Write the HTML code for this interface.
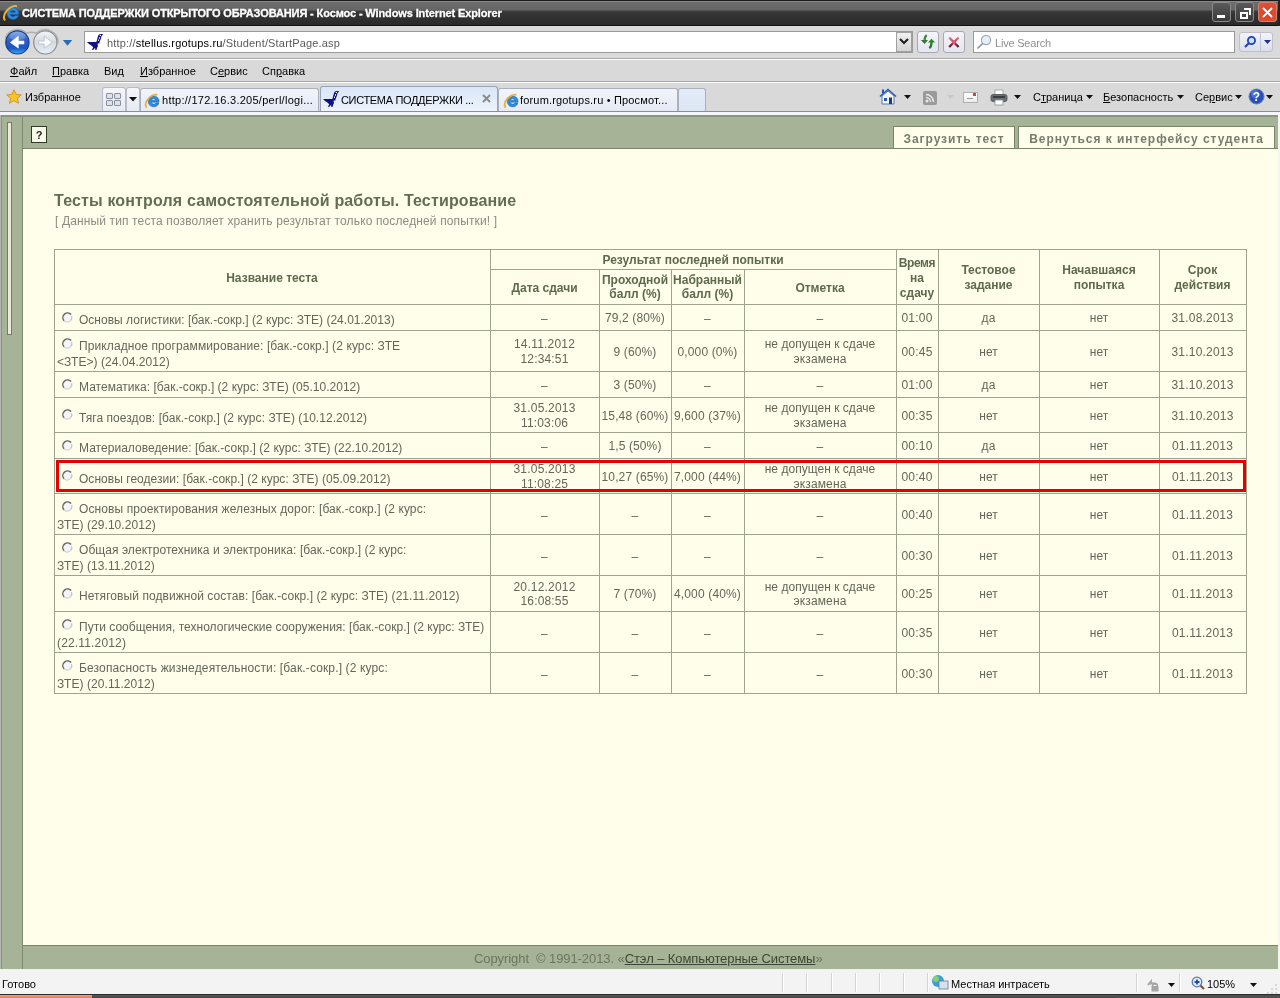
<!DOCTYPE html>
<html><head><meta charset="utf-8"><title>Тесты</title>
<style>
html,body{margin:0;padding:0;}
body{width:1280px;height:998px;position:relative;overflow:hidden;background:#dadada;font-family:"Liberation Sans",sans-serif;}
.r{position:absolute;}
.t{position:absolute;white-space:nowrap;font-family:"Liberation Sans",sans-serif;}
u{text-decoration:underline;}
</style></head><body><div id="w" style="position:absolute;left:0;top:0;width:1280px;height:998px;will-change:transform">
<div class="r" style="left:0px;top:0px;width:1280px;height:26px;background:linear-gradient(#1a1a1a 0,#1a1a1a 1px,#8a8a8a 1px,#8a8a8a 2px,#6c6c6c 2px,#666 10px,#3e3e3e 11px,#353535 13px,#2a2a2a 25px,#101010 25px)"></div>
<svg class="r" style="left:1px;top:2px" width="20" height="20" viewBox="0 0 20 20">
<path d="M11.8 5.5 A6 6 0 1 0 17.6 13.4 L14.3 13.4 A3 3 0 0 1 9 12.4 L17.8 12.4 A6 6 0 0 0 11.8 5.5 Z M9.1 10.2 A3 3 0 0 1 14.6 10.2 Z" fill="#2a8ee0" stroke="#1a5aa8" stroke-width="0.6"/>
<path d="M4 18.5 Q1 14 6 8.5 Q10.5 3.5 16 4.2" stroke="#e8b040" stroke-width="2" fill="none"/>
</svg>
<div class="t ttl" style="left:22px;top:6.00px;font-size:11px;line-height:14px;font-weight:bold;color:#fff;letter-spacing:-0.12px;-webkit-text-stroke:0.3px #fff;">СИСТЕМА ПОДДЕРЖКИ ОТКРЫТОГО ОБРАЗОВАНИЯ - Космос - Windows Internet Explorer</div>
<div class="r" style="left:1212px;top:2px;width:19px;height:20px;border:1px solid #8a8a8a;border-radius:3px;background:linear-gradient(#5a5a5a,#3a3a3a);box-sizing:border-box"></div>
<div class="r" style="left:1235px;top:2px;width:19px;height:20px;border:1px solid #8a8a8a;border-radius:3px;background:linear-gradient(#5a5a5a,#3a3a3a);box-sizing:border-box"></div>
<div class="r" style="left:1217px;top:15px;width:8px;height:3px;background:#fff"></div>
<div class="r" style="left:1240px;top:12px;width:8px;height:7px;border:2px solid #fff;box-sizing:border-box;background:#444"></div>
<div class="r" style="left:1244px;top:8px;width:7px;height:7px;border-top:2px solid #fff;border-right:2px solid #fff;box-sizing:border-box"></div>
<div class="r" style="left:1258px;top:2px;width:19px;height:20px;border:1px solid #d08070;border-radius:3px;background:radial-gradient(circle at 50% 60%,#e8391c,#d85a3a);box-sizing:border-box"></div>
<svg class="r" style="left:1261px;top:6px" width="13" height="13" viewBox="0 0 13 13"><path d="M2 2L11 11M11 2L2 11" stroke="#fff" stroke-width="2"/></svg>
<div class="r" style="left:1278px;top:0px;width:2px;height:26px;background:#222"></div>
<div class="r" style="left:0px;top:26px;width:1280px;height:33px;background:#dadada"></div>
<div class="r" style="left:0px;top:58px;width:1280px;height:1px;background:#a8a8a8"></div>
<div class="r" style="left:0px;top:59px;width:1280px;height:1px;background:#fff"></div>
<svg class="r" style="left:0px;top:26px" width="80" height="32" viewBox="0 0 80 32">
<defs>
<linearGradient id="bk" x1="0" y1="0" x2="0" y2="1"><stop offset="0" stop-color="#6a9ae8"/><stop offset="0.45" stop-color="#2a5cc0"/><stop offset="0.75" stop-color="#1a58c8"/><stop offset="1" stop-color="#3ab0f0"/></linearGradient>
<linearGradient id="fw" x1="0" y1="0" x2="0" y2="1"><stop offset="0" stop-color="#f4f6fa"/><stop offset="0.5" stop-color="#d4dae2"/><stop offset="1" stop-color="#e2f2fa"/></linearGradient>
</defs>
<path d="M5.3 12 A12.9 12.9 0 0 1 26.5 7.3 Q31.35 5.2 36.2 7.3 A12.9 12.9 0 0 1 58.1 17.5" stroke="#b0b0b0" stroke-width="1.5" fill="none"/>
<circle cx="17.4" cy="16.4" r="11.6" fill="#f2f2f2" opacity="0.6"/>
<circle cx="45.3" cy="16.4" r="11.6" fill="url(#fw)" stroke="#8e8e8e" stroke-width="1.2"/>
<circle cx="17.4" cy="16.4" r="11.6" fill="url(#bk)" stroke="#1a3a88" stroke-width="1.2"/>
<ellipse cx="17.4" cy="10" rx="8" ry="4.5" fill="#fff" opacity="0.18"/>
<path d="M10.3 16.4 L18.4 10 L18.4 15 L24 15 L24 18 L18.4 18 L18.4 22.2 Z" fill="#fff" stroke="#e8eef8" stroke-width="0.6" stroke-linejoin="round"/>
<path d="M52.3 16.4 L44.2 10 L44.2 15 L38.6 15 L38.6 18 L44.2 18 L44.2 22.2 Z" fill="#f8fafc" stroke="#b8bcc4" stroke-width="0.8" stroke-linejoin="round"/>
<path d="M62.8 14 L72.2 14 L67.5 19.7 Z" fill="#2a6cb0"/>
</svg>
<div class="r" style="left:84px;top:31px;width:829px;height:22px;background:#fff;border:1px solid #9a9a9a;box-sizing:border-box"></div>
<svg class="r" style="left:84px;top:31px" width="22" height="22" viewBox="0 0 22 22">
<path d="M3 11 L15.5 11 L15.5 12.5 L13.5 12.5 L14 15 L13 17 L12.8 18.8 L11 18.8 L11.3 17.3 L10.2 17.5 L9.6 18.8 L7.8 18.8 L9.3 16.2 L7 14.2 L5 13 Z" fill="#10108a"/>
<path d="M12.4 11 L13.5 7 L14.3 4.2 L16 3 L19 3 L18.5 4 L17.5 5.2 L16.8 8 L15.6 11 Z" fill="#10108a"/>
<circle cx="16.4" cy="4.5" r="0.7" fill="#fff"/><ellipse cx="15.5" cy="7" rx="0.5" ry="0.9" fill="#fff"/><ellipse cx="14.5" cy="9.2" rx="0.5" ry="0.9" fill="#fff"/>
</svg>
<div class="t" style="left:107px;top:36.0px;font-size:11px;line-height:14px;color:#5a5a5a;letter-spacing:0.17px">http://<span style="color:#000">stellus.rgotups.ru</span>/Student/StartPage.asp</div>
<span class="t" style="display:none"></span>
<div class="r" style="left:896px;top:32px;width:16px;height:20px;background:linear-gradient(#f0f0f0,#d4d4d4);border:1px solid #a0a0a0;box-sizing:border-box"></div>
<svg class="r" style="left:899px;top:38px" width="10" height="8" viewBox="0 0 10 8"><path d="M1 1L5 5L9 1" stroke="#222" stroke-width="2.2" fill="none"/></svg>
<div class="r" style="left:917px;top:31px;width:22px;height:22px;border:1px solid #a8a8b4;border-radius:3px;background:linear-gradient(#f4f4fa,#e4e6f0);box-sizing:border-box"></div>
<svg class="r" style="left:917px;top:31px" width="22" height="22" viewBox="0 0 22 22">
<path d="M7.6 9.5 Q7.4 5.5 9.8 4.2" stroke="#3a8a3a" stroke-width="2.2" fill="none"/><path d="M3.9 9 L11 9 L7.6 12.9 Z" fill="#2f7a2f"/>
<path d="M14.5 11 Q14.7 15.5 12.3 17.2" stroke="#2a7a2a" stroke-width="2.2" fill="none"/><path d="M11 11.5 L18.2 11.5 L14.5 7.7 Z" fill="#2a8a2a"/>
</svg>
<div class="r" style="left:943px;top:31px;width:22px;height:22px;border:1px solid #a8a8b4;border-radius:3px;background:linear-gradient(#f4f4fa,#e4e6f0);box-sizing:border-box"></div>
<svg class="r" style="left:943px;top:31px" width="22" height="22" viewBox="0 0 22 22">
<defs><linearGradient id="sx" x1="0" y1="0" x2="0" y2="1"><stop offset="0" stop-color="#e07888"/><stop offset="1" stop-color="#6a0a1a"/></linearGradient></defs>
<path d="M6.2 6.5 L15.6 16 M15.6 6.5 L6.2 16" stroke="url(#sx)" stroke-width="2.3"/><circle cx="10.9" cy="11.2" r="1.8" fill="#f05070"/>
</svg>
<div class="r" style="left:973px;top:31px;width:262px;height:22px;background:#fff;border:1px solid #9a9a9a;box-sizing:border-box"></div>
<svg class="r" style="left:976px;top:34px" width="16" height="16" viewBox="0 0 16 16"><circle cx="10" cy="6" r="4.6" fill="#e6eef8" stroke="#a0aab4" stroke-width="1.2"/><path d="M6.8 9.2L1.5 14.5" stroke="#8a9098" stroke-width="1.6"/></svg>
<div class="t " style="left:995px;top:36.00px;font-size:11px;line-height:14px;font-weight:normal;color:#8f8f8f;letter-spacing:-0.2px">Live Search</div>
<div class="r" style="left:1239px;top:32px;width:34px;height:20px;border:1px solid #c0c0cc;border-radius:3px;background:linear-gradient(#f2f4fa,#dadeea);box-sizing:border-box"></div>
<div class="r" style="left:1260px;top:33px;width:1px;height:18px;background:#c0c4d0"></div>
<svg class="r" style="left:1243px;top:35px" width="14" height="14" viewBox="0 0 14 14"><circle cx="8.5" cy="5.5" r="3.6" fill="#c8e0ff" stroke="#2040c0" stroke-width="1.8"/><path d="M6 8L2 12" stroke="#2040c0" stroke-width="2.2"/></svg>
<svg class="r" style="left:1264px;top:40px" width="7" height="5" viewBox="0 0 7 5"><path d="M0 0H7L3.5 4Z" fill="#20308a"/></svg>
<div class="r" style="left:0px;top:60px;width:1280px;height:21px;background:#d9d9d9"></div>
<div class="r" style="left:0px;top:81px;width:1280px;height:1px;background:#a8a8a8"></div>
<div class="r" style="left:0px;top:82px;width:1280px;height:1px;background:#fff"></div>
<div class="t" style="left:10px;top:64.0px;font-size:11px;line-height:14px;color:#000"><u>Ф</u>айл</div>
<div class="t" style="left:52px;top:64.0px;font-size:11px;line-height:14px;color:#000"><u>П</u>равка</div>
<div class="t" style="left:104px;top:64.0px;font-size:11px;line-height:14px;color:#000">Ви<u>д</u></div>
<div class="t" style="left:140px;top:64.0px;font-size:11px;line-height:14px;color:#000"><u>И</u>збранное</div>
<div class="t" style="left:210px;top:64.0px;font-size:11px;line-height:14px;color:#000">С<u>е</u>рвис</div>
<div class="t" style="left:262px;top:64.0px;font-size:11px;line-height:14px;color:#000">Сп<u>р</u>авка</div>
<div class="r" style="left:0px;top:83px;width:1280px;height:28px;background:#d9d9d9"></div>
<div class="r" style="left:0px;top:111px;width:1280px;height:1px;background:#8c8c96"></div>
<div class="r" style="left:0px;top:112px;width:1280px;height:3px;background:#f3f5fa"></div>
<svg class="r" style="left:6px;top:89px" width="16" height="16" viewBox="0 0 16 16"><path d="M8 0.8L10.2 5.4L15.2 5.9L11.4 9.3L12.5 14.3L8 11.7L3.5 14.3L4.6 9.3L0.8 5.9L5.8 5.4Z" fill="#f7c52a" stroke="#c88a10" stroke-width="0.8"/></svg>
<div class="t " style="left:25px;top:90.00px;font-size:11px;line-height:14px;font-weight:normal;color:#000;">Избранное</div>
<div class="r" style="left:102px;top:87px;width:24px;height:24px;border:1px solid #b8bcc8;border-bottom:none;border-radius:3px 3px 0 0;background:linear-gradient(#f4f6fa,#e6eaf2);box-sizing:border-box"></div>
<div class="r" style="left:106px;top:93px;width:7px;height:6px;border:1px solid #8890a0;border-radius:1px;background:#dde2ea;box-sizing:border-box"></div>
<div class="r" style="left:114px;top:93px;width:7px;height:6px;border:1px solid #8890a0;border-radius:1px;background:#dde2ea;box-sizing:border-box"></div>
<div class="r" style="left:106px;top:100px;width:7px;height:6px;border:1px solid #8890a0;border-radius:1px;background:#dde2ea;box-sizing:border-box"></div>
<div class="r" style="left:114px;top:100px;width:7px;height:6px;border:1px solid #8890a0;border-radius:1px;background:#dde2ea;box-sizing:border-box"></div>
<div class="r" style="left:126px;top:87px;width:14px;height:24px;border:1px solid #b8bcc8;border-bottom:none;border-radius:3px 3px 0 0;background:linear-gradient(#f4f6fa,#e6eaf2);box-sizing:border-box"></div>
<svg class="r" style="left:129px;top:97px" width="8" height="5" viewBox="0 0 8 5"><path d="M0 0H8L4 4.5Z" fill="#111"/></svg>
<div class="r" style="left:140px;top:88px;width:179px;height:23px;border:1px solid #aab0bc;border-bottom:none;border-radius:3px 3px 0 0;background:linear-gradient(#f2f5fb,#e4e9f3);box-sizing:border-box"></div>
<svg class="r" style="left:143px;top:91px" width="18" height="18" viewBox="0 0 20 20">
<path d="M11.8 5.5 A6 6 0 1 0 17.6 13.4 L14.3 13.4 A3 3 0 0 1 9 12.4 L17.8 12.4 A6 6 0 0 0 11.8 5.5 Z M9.1 10.2 A3 3 0 0 1 14.6 10.2 Z" fill="#2a8ee0" stroke="#1a5aa8" stroke-width="0.6"/>
<path d="M4 18.5 Q1 14 6 8.5 Q10.5 3.5 16 4.2" stroke="#e8b040" stroke-width="2" fill="none"/>
</svg>
<div class="t " style="left:162px;top:92.50px;font-size:11px;line-height:14px;font-weight:normal;color:#000;letter-spacing:0.27px">http://172.16.3.205/perl/logi...</div>
<div class="r" style="left:320px;top:86px;width:178px;height:25px;border:1px solid #9aa4b4;border-bottom:none;border-radius:3px 3px 0 0;background:linear-gradient(#d8e6f8,#eef3fb);box-sizing:border-box"></div>
<svg class="r" style="left:320px;top:88px" width="22" height="22" viewBox="0 0 22 22">
<path d="M3 11 L15.5 11 L15.5 12.5 L13.5 12.5 L14 15 L13 17 L12.8 18.8 L11 18.8 L11.3 17.3 L10.2 17.5 L9.6 18.8 L7.8 18.8 L9.3 16.2 L7 14.2 L5 13 Z" fill="#10108a"/>
<path d="M12.4 11 L13.5 7 L14.3 4.2 L16 3 L19 3 L18.5 4 L17.5 5.2 L16.8 8 L15.6 11 Z" fill="#10108a"/>
<circle cx="16.4" cy="4.5" r="0.7" fill="#fff"/><ellipse cx="15.5" cy="7" rx="0.5" ry="0.9" fill="#fff"/><ellipse cx="14.5" cy="9.2" rx="0.5" ry="0.9" fill="#fff"/>
</svg>
<div class="t " style="left:341px;top:92.50px;font-size:11px;line-height:14px;font-weight:normal;color:#000;letter-spacing:-0.33px">СИСТЕМА ПОДДЕРЖКИ ...</div>
<svg class="r" style="left:482px;top:94px" width="9" height="9" viewBox="0 0 9 9"><path d="M1 1L8 8M8 1L1 8" stroke="#8a8a8a" stroke-width="2"/></svg>
<div class="r" style="left:498px;top:88px;width:180px;height:23px;border:1px solid #aab0bc;border-bottom:none;border-radius:3px 3px 0 0;background:linear-gradient(#f2f5fb,#e4e9f3);box-sizing:border-box"></div>
<svg class="r" style="left:502px;top:91px" width="18" height="18" viewBox="0 0 20 20">
<path d="M11.8 5.5 A6 6 0 1 0 17.6 13.4 L14.3 13.4 A3 3 0 0 1 9 12.4 L17.8 12.4 A6 6 0 0 0 11.8 5.5 Z M9.1 10.2 A3 3 0 0 1 14.6 10.2 Z" fill="#2a8ee0" stroke="#1a5aa8" stroke-width="0.6"/>
<path d="M4 18.5 Q1 14 6 8.5 Q10.5 3.5 16 4.2" stroke="#e8b040" stroke-width="2" fill="none"/>
</svg>
<div class="t " style="left:520px;top:92.50px;font-size:11px;line-height:14px;font-weight:normal;color:#000;letter-spacing:0.17px">forum.rgotups.ru • Просмот...</div>
<div class="r" style="left:678px;top:88px;width:28px;height:23px;border:1px solid #aab0bc;border-bottom:none;border-radius:3px 3px 0 0;background:linear-gradient(#e4ecf8,#dce6f4);box-sizing:border-box"></div>
<svg class="r" style="left:879px;top:88px" width="18" height="17" viewBox="0 0 18 17">
<path d="M1 8.5L9 1.5L17 8.5" stroke="#2a5ab0" stroke-width="1.6" fill="none"/>
<path d="M3 8V16H15V8L9 3Z" fill="#f4f4f4" stroke="#5a7ab0" stroke-width="1"/>
<rect x="5" y="10" width="3" height="3" fill="#2a5ab0"/><rect x="10" y="9.5" width="3" height="6.5" fill="#1a3a8a"/>
<rect x="3" y="1.5" width="2" height="4" fill="#2a5ab0"/></svg>
<svg class="r" style="left:904px;top:95px" width="7" height="4" viewBox="0 0 7 4"><path d="M0 0H7L3.5 4Z" fill="#111"/></svg>
<div class="r" style="left:923px;top:91px;width:14px;height:14px;border-radius:2px;background:#9a9a9a"></div>
<svg class="r" style="left:923px;top:91px" width="14" height="14" viewBox="0 0 14 14"><circle cx="4" cy="10" r="1.5" fill="#e8e8e8"/><path d="M3 6.5A4.5 4.5 0 0 1 7.5 11M3 3.5A7.5 7.5 0 0 1 10.5 11" stroke="#e8e8e8" stroke-width="1.5" fill="none"/></svg>
<svg class="r" style="left:947px;top:95px" width="7" height="4" viewBox="0 0 7 4"><path d="M0 0H7L3.5 4Z" fill="#c8c8c8"/></svg>
<div class="r" style="left:963px;top:92px;width:15px;height:11px;border:1px solid #b0b0b0;background:linear-gradient(#fff,#ececec);box-sizing:border-box"></div>
<div class="r" style="left:973px;top:93px;width:3px;height:3px;background:#d84040"></div>
<div class="r" style="left:967px;top:98px;width:6px;height:1px;background:#999"></div>
<svg class="r" style="left:990px;top:89px" width="18" height="17" viewBox="0 0 18 17">
<rect x="5" y="1" width="8" height="5" fill="#fff" stroke="#999" stroke-width="0.8"/>
<rect x="1" y="5.5" width="16" height="7" rx="2" fill="#6a7070" stroke="#4a5050" stroke-width="0.8"/>
<rect x="3" y="7" width="12" height="2" fill="#3a4040"/>
<rect x="5" y="11" width="8" height="5" fill="#fff" stroke="#8a9090" stroke-width="0.8"/></svg>
<svg class="r" style="left:1014px;top:95px" width="7" height="4" viewBox="0 0 7 4"><path d="M0 0H7L3.5 4Z" fill="#111"/></svg>
<div class="t" style="left:1033px;top:90.0px;font-size:11px;line-height:14px;color:#000">С<u>т</u>раница</div>
<svg class="r" style="left:1086px;top:95px" width="7" height="4" viewBox="0 0 7 4"><path d="M0 0H7L3.5 4Z" fill="#111"/></svg>
<div class="t" style="left:1103px;top:90.0px;font-size:11px;line-height:14px;color:#000"><u>Б</u>езопасность</div>
<svg class="r" style="left:1177px;top:95px" width="7" height="4" viewBox="0 0 7 4"><path d="M0 0H7L3.5 4Z" fill="#111"/></svg>
<div class="t" style="left:1195px;top:90.0px;font-size:11px;line-height:14px;color:#000">Се<u>р</u>вис</div>
<svg class="r" style="left:1235px;top:95px" width="7" height="4" viewBox="0 0 7 4"><path d="M0 0H7L3.5 4Z" fill="#111"/></svg>
<svg class="r" style="left:1248px;top:88px" width="17" height="17" viewBox="0 0 17 17"><circle cx="8.5" cy="8.5" r="7.5" fill="#2a50c0" stroke="#6a80b0" stroke-width="1"/><circle cx="7" cy="6" r="4" fill="#5a88e8" opacity="0.6"/><text x="8.5" y="13" font-family="Liberation Sans" font-weight="bold" font-size="12" fill="#fff" text-anchor="middle">?</text></svg>
<svg class="r" style="left:1266px;top:95px" width="7" height="4" viewBox="0 0 7 4"><path d="M0 0H7L3.5 4Z" fill="#111"/></svg>
<div class="r" style="left:0px;top:115px;width:1280px;height:854px;background:#a6b397"></div>
<div class="r" style="left:0px;top:115px;width:1280px;height:2px;background:#8a9580"></div>
<div class="r" style="left:0px;top:115px;width:1px;height:854px;background:#b4b8b0"></div>
<div class="r" style="left:1px;top:115px;width:1px;height:854px;background:#8a9085"></div>
<div class="r" style="left:22px;top:117px;width:1px;height:852px;background:#7f8a72"></div>
<div class="r" style="left:7px;top:122px;width:5px;height:213px;background:#ece9d6;border:1px solid #78786a;box-sizing:border-box"></div>
<div class="r" style="left:1278px;top:115px;width:2px;height:854px;background:#f4f6f0"></div>
<div class="r" style="left:31px;top:126px;width:16px;height:17px;background:#fafaea;border:1px solid #2e3a26;box-sizing:border-box"></div>
<div class="t" style="left:31px;width:16px;text-align:center;top:128.00px;font-size:11px;line-height:14px;font-weight:bold;color:#222;">?</div>
<div class="r" style="left:23px;top:148px;width:1255px;height:1px;background:#7a866c"></div>
<div class="r" style="left:23px;top:149px;width:1255px;height:796px;background:#fefeea"></div>
<div class="r" style="left:23px;top:945px;width:1255px;height:1px;background:#7a866c"></div>
<div class="r" style="left:893px;top:126px;width:122px;height:22px;background:#fefeea;border:1px solid #7a866c;border-bottom:none;box-sizing:border-box"></div>
<div class="t" style="left:893px;width:122px;text-align:center;top:131.00px;font-size:12px;line-height:16px;font-weight:bold;color:#787d6c;letter-spacing:0.95px">Загрузить тест</div>
<div class="r" style="left:1018px;top:126px;width:257px;height:22px;background:#fefeea;border:1px solid #7a866c;border-bottom:none;box-sizing:border-box"></div>
<div class="t" style="left:1018px;width:257px;text-align:center;top:131.00px;font-size:12px;line-height:16px;font-weight:bold;color:#787d6c;letter-spacing:0.95px">Вернуться к интерфейсу студента</div>
<div class="r" style="left:1275px;top:126px;width:3px;height:22px;background:#a6b397"></div>
<div class="t " style="left:54px;top:189.50px;font-size:16px;line-height:21px;font-weight:bold;color:#636d55;letter-spacing:0.15px">Тесты контроля самостоятельной работы. Тестирование</div>
<div class="t " style="left:55px;top:213.00px;font-size:12px;line-height:16px;font-weight:normal;color:#8c8c84;letter-spacing:0.13px">[ Данный тип теста позволяет хранить результат только последней попытки! ]</div>
<div class="r" style="left:54px;top:249px;width:1193px;height:1px;background:#a0a48e"></div>
<div class="r" style="left:54px;top:304px;width:1193px;height:1px;background:#a0a48e"></div>
<div class="r" style="left:54px;top:330px;width:1193px;height:1px;background:#a0a48e"></div>
<div class="r" style="left:54px;top:371px;width:1193px;height:1px;background:#a0a48e"></div>
<div class="r" style="left:54px;top:397px;width:1193px;height:1px;background:#a0a48e"></div>
<div class="r" style="left:54px;top:432px;width:1193px;height:1px;background:#a0a48e"></div>
<div class="r" style="left:54px;top:458px;width:1193px;height:1px;background:#a0a48e"></div>
<div class="r" style="left:54px;top:493px;width:1193px;height:1px;background:#a0a48e"></div>
<div class="r" style="left:54px;top:534px;width:1193px;height:1px;background:#a0a48e"></div>
<div class="r" style="left:54px;top:575px;width:1193px;height:1px;background:#a0a48e"></div>
<div class="r" style="left:54px;top:611px;width:1193px;height:1px;background:#a0a48e"></div>
<div class="r" style="left:54px;top:652px;width:1193px;height:1px;background:#a0a48e"></div>
<div class="r" style="left:54px;top:693px;width:1193px;height:1px;background:#a0a48e"></div>
<div class="r" style="left:490px;top:269px;width:406px;height:1px;background:#a0a48e"></div>
<div class="r" style="left:54px;top:249px;width:1px;height:445px;background:#a0a48e"></div>
<div class="r" style="left:490px;top:249px;width:1px;height:445px;background:#a0a48e"></div>
<div class="r" style="left:599px;top:269px;width:1px;height:425px;background:#a0a48e"></div>
<div class="r" style="left:671px;top:269px;width:1px;height:425px;background:#a0a48e"></div>
<div class="r" style="left:744px;top:269px;width:1px;height:425px;background:#a0a48e"></div>
<div class="r" style="left:896px;top:249px;width:1px;height:445px;background:#a0a48e"></div>
<div class="r" style="left:938px;top:249px;width:1px;height:445px;background:#a0a48e"></div>
<div class="r" style="left:1039px;top:249px;width:1px;height:445px;background:#a0a48e"></div>
<div class="r" style="left:1159px;top:249px;width:1px;height:445px;background:#a0a48e"></div>
<div class="r" style="left:1246px;top:249px;width:1px;height:445px;background:#a0a48e"></div>
<div class="t" style="left:54px;width:436px;text-align:center;top:269.50px;font-size:12px;line-height:16px;font-weight:bold;color:#5e6a4c;">Название теста</div>
<div class="t" style="left:490px;width:406px;text-align:center;top:252.00px;font-size:12px;line-height:16px;font-weight:bold;color:#5e6a4c;">Результат последней попытки</div>
<div class="t" style="left:490px;width:109px;text-align:center;top:279.50px;font-size:12px;line-height:16px;font-weight:bold;color:#5e6a4c;">Дата сдачи</div>
<div class="t" style="left:599px;width:72px;text-align:center;top:271.50px;font-size:12px;line-height:16px;font-weight:bold;color:#5e6a4c;">Проходной</div>
<div class="t" style="left:599px;width:72px;text-align:center;top:286.00px;font-size:12px;line-height:16px;font-weight:bold;color:#5e6a4c;">балл (%)</div>
<div class="t" style="left:671px;width:73px;text-align:center;top:271.50px;font-size:12px;line-height:16px;font-weight:bold;color:#5e6a4c;">Набранный</div>
<div class="t" style="left:671px;width:73px;text-align:center;top:286.00px;font-size:12px;line-height:16px;font-weight:bold;color:#5e6a4c;">балл (%)</div>
<div class="t" style="left:744px;width:152px;text-align:center;top:279.50px;font-size:12px;line-height:16px;font-weight:bold;color:#5e6a4c;">Отметка</div>
<div class="t" style="left:896px;width:42px;text-align:center;top:255.00px;font-size:12px;line-height:16px;font-weight:bold;color:#5e6a4c;letter-spacing:-0.4px">Время</div>
<div class="t" style="left:896px;width:42px;text-align:center;top:270.00px;font-size:12px;line-height:16px;font-weight:bold;color:#5e6a4c;">на</div>
<div class="t" style="left:896px;width:42px;text-align:center;top:284.75px;font-size:12px;line-height:16px;font-weight:bold;color:#5e6a4c;">сдачу</div>
<div class="t" style="left:938px;width:101px;text-align:center;top:261.50px;font-size:12px;line-height:16px;font-weight:bold;color:#5e6a4c;">Тестовое</div>
<div class="t" style="left:938px;width:101px;text-align:center;top:276.50px;font-size:12px;line-height:16px;font-weight:bold;color:#5e6a4c;">задание</div>
<div class="t" style="left:1039px;width:120px;text-align:center;top:261.50px;font-size:12px;line-height:16px;font-weight:bold;color:#5e6a4c;">Начавшаяся</div>
<div class="t" style="left:1039px;width:120px;text-align:center;top:276.50px;font-size:12px;line-height:16px;font-weight:bold;color:#5e6a4c;">попытка</div>
<div class="t" style="left:1159px;width:87px;text-align:center;top:261.50px;font-size:12px;line-height:16px;font-weight:bold;color:#5e6a4c;">Срок</div>
<div class="t" style="left:1159px;width:87px;text-align:center;top:276.50px;font-size:12px;line-height:16px;font-weight:bold;color:#5e6a4c;">действия</div>
<svg class="r" style="left:61px;top:310.8px" width="13" height="13" viewBox="0 0 13 13"><circle cx="6.25" cy="6.4" r="4.8" fill="#f6f6fa"/><path d="M9.55 9.7 A4.65 4.65 0 0 1 2.95 9.7" stroke="#d0d0cc" stroke-width="1.2" fill="none"/><path d="M9.55 9.7 A4.65 4.65 0 0 0 10.6 5" stroke="#c4c4c0" stroke-width="1.2" fill="none"/><path d="M2.95 9.7 A4.65 4.65 0 0 1 10.1 3.6" stroke="#6a6a66" stroke-width="1.5" fill="none"/></svg>
<div class="t " style="left:79px;top:312.00px;font-size:12px;line-height:16px;font-weight:normal;color:#646658;letter-spacing:0.013px">Основы логистики: [бак.-сокр.] (2 курс: ЗТЕ) (24.01.2013)</div>
<div class="t" style="left:490px;width:109px;text-align:center;top:311.00px;font-size:12px;line-height:16px;font-weight:normal;color:#646658;letter-spacing:0.326px;">–</div>
<div class="t" style="left:599px;width:72px;text-align:center;top:310.00px;font-size:12px;line-height:16px;font-weight:normal;color:#646658;letter-spacing:0.130px;">79,2 (80%)</div>
<div class="t" style="left:671px;width:73px;text-align:center;top:311.00px;font-size:12px;line-height:16px;font-weight:normal;color:#646658;letter-spacing:0.326px;">–</div>
<div class="t" style="left:744px;width:152px;text-align:center;top:311.00px;font-size:12px;line-height:16px;font-weight:normal;color:#646658;letter-spacing:0.326px;">–</div>
<div class="t" style="left:896px;width:42px;text-align:center;top:310.00px;font-size:12px;line-height:16px;font-weight:normal;color:#646658;letter-spacing:0.194px;">01:00</div>
<div class="t" style="left:938px;width:101px;text-align:center;top:310.00px;font-size:12px;line-height:16px;font-weight:normal;color:#646658;letter-spacing:0.162px;">да</div>
<div class="t" style="left:1039px;width:120px;text-align:center;top:310.00px;font-size:12px;line-height:16px;font-weight:normal;color:#646658;letter-spacing:0.068px;">нет</div>
<div class="t" style="left:1159px;width:87px;text-align:center;top:310.00px;font-size:12px;line-height:16px;font-weight:normal;color:#646658;letter-spacing:0.194px;">31.08.2013</div>
<svg class="r" style="left:61px;top:336.8px" width="13" height="13" viewBox="0 0 13 13"><circle cx="6.25" cy="6.4" r="4.8" fill="#f6f6fa"/><path d="M9.55 9.7 A4.65 4.65 0 0 1 2.95 9.7" stroke="#d0d0cc" stroke-width="1.2" fill="none"/><path d="M9.55 9.7 A4.65 4.65 0 0 0 10.6 5" stroke="#c4c4c0" stroke-width="1.2" fill="none"/><path d="M2.95 9.7 A4.65 4.65 0 0 1 10.1 3.6" stroke="#6a6a66" stroke-width="1.5" fill="none"/></svg>
<div class="t " style="left:79px;top:338.00px;font-size:12px;line-height:16px;font-weight:normal;color:#646658;letter-spacing:0.098px">Прикладное программирование: [бак.-сокр.] (2 курс: ЗТЕ</div>
<div class="t " style="left:57px;top:354.00px;font-size:12px;line-height:16px;font-weight:normal;color:#646658;letter-spacing:0.054px;">&lt;ЗТЕ&gt;) (24.04.2012)</div>
<div class="t" style="left:490px;width:109px;text-align:center;top:336.00px;font-size:12px;line-height:16px;font-weight:normal;color:#646658;letter-spacing:0.194px;">14.11.2012</div>
<div class="t" style="left:490px;width:109px;text-align:center;top:350.50px;font-size:12px;line-height:16px;font-weight:normal;color:#646658;letter-spacing:0.161px;">12:34:51</div>
<div class="t" style="left:599px;width:72px;text-align:center;top:343.50px;font-size:12px;line-height:16px;font-weight:normal;color:#646658;letter-spacing:0.140px;">9 (60%)</div>
<div class="t" style="left:671px;width:73px;text-align:center;top:343.50px;font-size:12px;line-height:16px;font-weight:normal;color:#646658;letter-spacing:0.130px;">0,000 (0%)</div>
<div class="t" style="left:744px;width:152px;text-align:center;top:336.00px;font-size:12px;line-height:16px;font-weight:normal;color:#646658;letter-spacing:0.028px;">не допущен к сдаче</div>
<div class="t" style="left:744px;width:152px;text-align:center;top:350.50px;font-size:12px;line-height:16px;font-weight:normal;color:#646658;letter-spacing:0.153px;">экзамена</div>
<div class="t" style="left:896px;width:42px;text-align:center;top:343.50px;font-size:12px;line-height:16px;font-weight:normal;color:#646658;letter-spacing:0.194px;">00:45</div>
<div class="t" style="left:938px;width:101px;text-align:center;top:343.50px;font-size:12px;line-height:16px;font-weight:normal;color:#646658;letter-spacing:0.068px;">нет</div>
<div class="t" style="left:1039px;width:120px;text-align:center;top:343.50px;font-size:12px;line-height:16px;font-weight:normal;color:#646658;letter-spacing:0.068px;">нет</div>
<div class="t" style="left:1159px;width:87px;text-align:center;top:343.50px;font-size:12px;line-height:16px;font-weight:normal;color:#646658;letter-spacing:0.194px;">31.10.2013</div>
<svg class="r" style="left:61px;top:377.8px" width="13" height="13" viewBox="0 0 13 13"><circle cx="6.25" cy="6.4" r="4.8" fill="#f6f6fa"/><path d="M9.55 9.7 A4.65 4.65 0 0 1 2.95 9.7" stroke="#d0d0cc" stroke-width="1.2" fill="none"/><path d="M9.55 9.7 A4.65 4.65 0 0 0 10.6 5" stroke="#c4c4c0" stroke-width="1.2" fill="none"/><path d="M2.95 9.7 A4.65 4.65 0 0 1 10.1 3.6" stroke="#6a6a66" stroke-width="1.5" fill="none"/></svg>
<div class="t " style="left:79px;top:379.00px;font-size:12px;line-height:16px;font-weight:normal;color:#646658;letter-spacing:0.016px">Математика: [бак.-сокр.] (2 курс: ЗТЕ) (05.10.2012)</div>
<div class="t" style="left:490px;width:109px;text-align:center;top:378.00px;font-size:12px;line-height:16px;font-weight:normal;color:#646658;letter-spacing:0.326px;">–</div>
<div class="t" style="left:599px;width:72px;text-align:center;top:377.00px;font-size:12px;line-height:16px;font-weight:normal;color:#646658;letter-spacing:0.140px;">3 (50%)</div>
<div class="t" style="left:671px;width:73px;text-align:center;top:378.00px;font-size:12px;line-height:16px;font-weight:normal;color:#646658;letter-spacing:0.326px;">–</div>
<div class="t" style="left:744px;width:152px;text-align:center;top:378.00px;font-size:12px;line-height:16px;font-weight:normal;color:#646658;letter-spacing:0.326px;">–</div>
<div class="t" style="left:896px;width:42px;text-align:center;top:377.00px;font-size:12px;line-height:16px;font-weight:normal;color:#646658;letter-spacing:0.194px;">01:00</div>
<div class="t" style="left:938px;width:101px;text-align:center;top:377.00px;font-size:12px;line-height:16px;font-weight:normal;color:#646658;letter-spacing:0.162px;">да</div>
<div class="t" style="left:1039px;width:120px;text-align:center;top:377.00px;font-size:12px;line-height:16px;font-weight:normal;color:#646658;letter-spacing:0.068px;">нет</div>
<div class="t" style="left:1159px;width:87px;text-align:center;top:377.00px;font-size:12px;line-height:16px;font-weight:normal;color:#646658;letter-spacing:0.194px;">31.10.2013</div>
<svg class="r" style="left:61px;top:408.3px" width="13" height="13" viewBox="0 0 13 13"><circle cx="6.25" cy="6.4" r="4.8" fill="#f6f6fa"/><path d="M9.55 9.7 A4.65 4.65 0 0 1 2.95 9.7" stroke="#d0d0cc" stroke-width="1.2" fill="none"/><path d="M9.55 9.7 A4.65 4.65 0 0 0 10.6 5" stroke="#c4c4c0" stroke-width="1.2" fill="none"/><path d="M2.95 9.7 A4.65 4.65 0 0 1 10.1 3.6" stroke="#6a6a66" stroke-width="1.5" fill="none"/></svg>
<div class="t " style="left:79px;top:409.50px;font-size:12px;line-height:16px;font-weight:normal;color:#646658;letter-spacing:0.058px">Тяга поездов: [бак.-сокр.] (2 курс: ЗТЕ) (10.12.2012)</div>
<div class="t" style="left:490px;width:109px;text-align:center;top:400.00px;font-size:12px;line-height:16px;font-weight:normal;color:#646658;letter-spacing:0.194px;">31.05.2013</div>
<div class="t" style="left:490px;width:109px;text-align:center;top:414.50px;font-size:12px;line-height:16px;font-weight:normal;color:#646658;letter-spacing:0.161px;">11:03:06</div>
<div class="t" style="left:599px;width:72px;text-align:center;top:407.50px;font-size:12px;line-height:16px;font-weight:normal;color:#646658;letter-spacing:0.148px;">15,48 (60%)</div>
<div class="t" style="left:671px;width:73px;text-align:center;top:407.50px;font-size:12px;line-height:16px;font-weight:normal;color:#646658;letter-spacing:0.148px;">9,600 (37%)</div>
<div class="t" style="left:744px;width:152px;text-align:center;top:400.00px;font-size:12px;line-height:16px;font-weight:normal;color:#646658;letter-spacing:0.028px;">не допущен к сдаче</div>
<div class="t" style="left:744px;width:152px;text-align:center;top:414.50px;font-size:12px;line-height:16px;font-weight:normal;color:#646658;letter-spacing:0.153px;">экзамена</div>
<div class="t" style="left:896px;width:42px;text-align:center;top:407.50px;font-size:12px;line-height:16px;font-weight:normal;color:#646658;letter-spacing:0.194px;">00:35</div>
<div class="t" style="left:938px;width:101px;text-align:center;top:407.50px;font-size:12px;line-height:16px;font-weight:normal;color:#646658;letter-spacing:0.068px;">нет</div>
<div class="t" style="left:1039px;width:120px;text-align:center;top:407.50px;font-size:12px;line-height:16px;font-weight:normal;color:#646658;letter-spacing:0.068px;">нет</div>
<div class="t" style="left:1159px;width:87px;text-align:center;top:407.50px;font-size:12px;line-height:16px;font-weight:normal;color:#646658;letter-spacing:0.194px;">31.10.2013</div>
<svg class="r" style="left:61px;top:438.8px" width="13" height="13" viewBox="0 0 13 13"><circle cx="6.25" cy="6.4" r="4.8" fill="#f6f6fa"/><path d="M9.55 9.7 A4.65 4.65 0 0 1 2.95 9.7" stroke="#d0d0cc" stroke-width="1.2" fill="none"/><path d="M9.55 9.7 A4.65 4.65 0 0 0 10.6 5" stroke="#c4c4c0" stroke-width="1.2" fill="none"/><path d="M2.95 9.7 A4.65 4.65 0 0 1 10.1 3.6" stroke="#6a6a66" stroke-width="1.5" fill="none"/></svg>
<div class="t " style="left:79px;top:440.00px;font-size:12px;line-height:16px;font-weight:normal;color:#646658;letter-spacing:0.030px">Материаловедение: [бак.-сокр.] (2 курс: ЗТЕ) (22.10.2012)</div>
<div class="t" style="left:490px;width:109px;text-align:center;top:439.00px;font-size:12px;line-height:16px;font-weight:normal;color:#646658;letter-spacing:0.326px;">–</div>
<div class="t" style="left:599px;width:72px;text-align:center;top:438.00px;font-size:12px;line-height:16px;font-weight:normal;color:#646658;letter-spacing:0.108px;">1,5 (50%)</div>
<div class="t" style="left:671px;width:73px;text-align:center;top:439.00px;font-size:12px;line-height:16px;font-weight:normal;color:#646658;letter-spacing:0.326px;">–</div>
<div class="t" style="left:744px;width:152px;text-align:center;top:439.00px;font-size:12px;line-height:16px;font-weight:normal;color:#646658;letter-spacing:0.326px;">–</div>
<div class="t" style="left:896px;width:42px;text-align:center;top:438.00px;font-size:12px;line-height:16px;font-weight:normal;color:#646658;letter-spacing:0.194px;">00:10</div>
<div class="t" style="left:938px;width:101px;text-align:center;top:438.00px;font-size:12px;line-height:16px;font-weight:normal;color:#646658;letter-spacing:0.162px;">да</div>
<div class="t" style="left:1039px;width:120px;text-align:center;top:438.00px;font-size:12px;line-height:16px;font-weight:normal;color:#646658;letter-spacing:0.068px;">нет</div>
<div class="t" style="left:1159px;width:87px;text-align:center;top:438.00px;font-size:12px;line-height:16px;font-weight:normal;color:#646658;letter-spacing:0.194px;">01.11.2013</div>
<svg class="r" style="left:61px;top:469.3px" width="13" height="13" viewBox="0 0 13 13"><circle cx="6.25" cy="6.4" r="4.8" fill="#f6f6fa"/><path d="M9.55 9.7 A4.65 4.65 0 0 1 2.95 9.7" stroke="#d0d0cc" stroke-width="1.2" fill="none"/><path d="M9.55 9.7 A4.65 4.65 0 0 0 10.6 5" stroke="#c4c4c0" stroke-width="1.2" fill="none"/><path d="M2.95 9.7 A4.65 4.65 0 0 1 10.1 3.6" stroke="#6a6a66" stroke-width="1.5" fill="none"/></svg>
<div class="t " style="left:79px;top:470.50px;font-size:12px;line-height:16px;font-weight:normal;color:#646658;letter-spacing:0.038px">Основы геодезии: [бак.-сокр.] (2 курс: ЗТЕ) (05.09.2012)</div>
<div class="t" style="left:490px;width:109px;text-align:center;top:461.00px;font-size:12px;line-height:16px;font-weight:normal;color:#646658;letter-spacing:0.194px;">31.05.2013</div>
<div class="t" style="left:490px;width:109px;text-align:center;top:475.50px;font-size:12px;line-height:16px;font-weight:normal;color:#646658;letter-spacing:0.161px;">11:08:25</div>
<div class="t" style="left:599px;width:72px;text-align:center;top:468.50px;font-size:12px;line-height:16px;font-weight:normal;color:#646658;letter-spacing:0.148px;">10,27 (65%)</div>
<div class="t" style="left:671px;width:73px;text-align:center;top:468.50px;font-size:12px;line-height:16px;font-weight:normal;color:#646658;letter-spacing:0.148px;">7,000 (44%)</div>
<div class="t" style="left:744px;width:152px;text-align:center;top:461.00px;font-size:12px;line-height:16px;font-weight:normal;color:#646658;letter-spacing:0.028px;">не допущен к сдаче</div>
<div class="t" style="left:744px;width:152px;text-align:center;top:475.50px;font-size:12px;line-height:16px;font-weight:normal;color:#646658;letter-spacing:0.153px;">экзамена</div>
<div class="t" style="left:896px;width:42px;text-align:center;top:468.50px;font-size:12px;line-height:16px;font-weight:normal;color:#646658;letter-spacing:0.194px;">00:40</div>
<div class="t" style="left:938px;width:101px;text-align:center;top:468.50px;font-size:12px;line-height:16px;font-weight:normal;color:#646658;letter-spacing:0.068px;">нет</div>
<div class="t" style="left:1039px;width:120px;text-align:center;top:468.50px;font-size:12px;line-height:16px;font-weight:normal;color:#646658;letter-spacing:0.068px;">нет</div>
<div class="t" style="left:1159px;width:87px;text-align:center;top:468.50px;font-size:12px;line-height:16px;font-weight:normal;color:#646658;letter-spacing:0.194px;">01.11.2013</div>
<svg class="r" style="left:61px;top:499.8px" width="13" height="13" viewBox="0 0 13 13"><circle cx="6.25" cy="6.4" r="4.8" fill="#f6f6fa"/><path d="M9.55 9.7 A4.65 4.65 0 0 1 2.95 9.7" stroke="#d0d0cc" stroke-width="1.2" fill="none"/><path d="M9.55 9.7 A4.65 4.65 0 0 0 10.6 5" stroke="#c4c4c0" stroke-width="1.2" fill="none"/><path d="M2.95 9.7 A4.65 4.65 0 0 1 10.1 3.6" stroke="#6a6a66" stroke-width="1.5" fill="none"/></svg>
<div class="t " style="left:79px;top:501.00px;font-size:12px;line-height:16px;font-weight:normal;color:#646658;letter-spacing:0.095px">Основы проектирования железных дорог: [бак.-сокр.] (2 курс:</div>
<div class="t " style="left:57px;top:517.00px;font-size:12px;line-height:16px;font-weight:normal;color:#646658;letter-spacing:0.061px;">ЗТЕ) (29.10.2012)</div>
<div class="t" style="left:490px;width:109px;text-align:center;top:507.50px;font-size:12px;line-height:16px;font-weight:normal;color:#646658;letter-spacing:0.326px;">–</div>
<div class="t" style="left:599px;width:72px;text-align:center;top:507.50px;font-size:12px;line-height:16px;font-weight:normal;color:#646658;letter-spacing:0.326px;">–</div>
<div class="t" style="left:671px;width:73px;text-align:center;top:507.50px;font-size:12px;line-height:16px;font-weight:normal;color:#646658;letter-spacing:0.326px;">–</div>
<div class="t" style="left:744px;width:152px;text-align:center;top:507.50px;font-size:12px;line-height:16px;font-weight:normal;color:#646658;letter-spacing:0.326px;">–</div>
<div class="t" style="left:896px;width:42px;text-align:center;top:506.50px;font-size:12px;line-height:16px;font-weight:normal;color:#646658;letter-spacing:0.194px;">00:40</div>
<div class="t" style="left:938px;width:101px;text-align:center;top:506.50px;font-size:12px;line-height:16px;font-weight:normal;color:#646658;letter-spacing:0.068px;">нет</div>
<div class="t" style="left:1039px;width:120px;text-align:center;top:506.50px;font-size:12px;line-height:16px;font-weight:normal;color:#646658;letter-spacing:0.068px;">нет</div>
<div class="t" style="left:1159px;width:87px;text-align:center;top:506.50px;font-size:12px;line-height:16px;font-weight:normal;color:#646658;letter-spacing:0.194px;">01.11.2013</div>
<svg class="r" style="left:61px;top:540.8px" width="13" height="13" viewBox="0 0 13 13"><circle cx="6.25" cy="6.4" r="4.8" fill="#f6f6fa"/><path d="M9.55 9.7 A4.65 4.65 0 0 1 2.95 9.7" stroke="#d0d0cc" stroke-width="1.2" fill="none"/><path d="M9.55 9.7 A4.65 4.65 0 0 0 10.6 5" stroke="#c4c4c0" stroke-width="1.2" fill="none"/><path d="M2.95 9.7 A4.65 4.65 0 0 1 10.1 3.6" stroke="#6a6a66" stroke-width="1.5" fill="none"/></svg>
<div class="t " style="left:79px;top:542.00px;font-size:12px;line-height:16px;font-weight:normal;color:#646658;letter-spacing:0.061px">Общая электротехника и электроника: [бак.-сокр.] (2 курс:</div>
<div class="t " style="left:57px;top:558.00px;font-size:12px;line-height:16px;font-weight:normal;color:#646658;letter-spacing:0.061px;">ЗТЕ) (13.11.2012)</div>
<div class="t" style="left:490px;width:109px;text-align:center;top:548.50px;font-size:12px;line-height:16px;font-weight:normal;color:#646658;letter-spacing:0.326px;">–</div>
<div class="t" style="left:599px;width:72px;text-align:center;top:548.50px;font-size:12px;line-height:16px;font-weight:normal;color:#646658;letter-spacing:0.326px;">–</div>
<div class="t" style="left:671px;width:73px;text-align:center;top:548.50px;font-size:12px;line-height:16px;font-weight:normal;color:#646658;letter-spacing:0.326px;">–</div>
<div class="t" style="left:744px;width:152px;text-align:center;top:548.50px;font-size:12px;line-height:16px;font-weight:normal;color:#646658;letter-spacing:0.326px;">–</div>
<div class="t" style="left:896px;width:42px;text-align:center;top:547.50px;font-size:12px;line-height:16px;font-weight:normal;color:#646658;letter-spacing:0.194px;">00:30</div>
<div class="t" style="left:938px;width:101px;text-align:center;top:547.50px;font-size:12px;line-height:16px;font-weight:normal;color:#646658;letter-spacing:0.068px;">нет</div>
<div class="t" style="left:1039px;width:120px;text-align:center;top:547.50px;font-size:12px;line-height:16px;font-weight:normal;color:#646658;letter-spacing:0.068px;">нет</div>
<div class="t" style="left:1159px;width:87px;text-align:center;top:547.50px;font-size:12px;line-height:16px;font-weight:normal;color:#646658;letter-spacing:0.194px;">01.11.2013</div>
<svg class="r" style="left:61px;top:586.8px" width="13" height="13" viewBox="0 0 13 13"><circle cx="6.25" cy="6.4" r="4.8" fill="#f6f6fa"/><path d="M9.55 9.7 A4.65 4.65 0 0 1 2.95 9.7" stroke="#d0d0cc" stroke-width="1.2" fill="none"/><path d="M9.55 9.7 A4.65 4.65 0 0 0 10.6 5" stroke="#c4c4c0" stroke-width="1.2" fill="none"/><path d="M2.95 9.7 A4.65 4.65 0 0 1 10.1 3.6" stroke="#6a6a66" stroke-width="1.5" fill="none"/></svg>
<div class="t " style="left:79px;top:588.00px;font-size:12px;line-height:16px;font-weight:normal;color:#646658;letter-spacing:0.062px">Нетяговый подвижной состав: [бак.-сокр.] (2 курс: ЗТЕ) (21.11.2012)</div>
<div class="t" style="left:490px;width:109px;text-align:center;top:578.50px;font-size:12px;line-height:16px;font-weight:normal;color:#646658;letter-spacing:0.194px;">20.12.2012</div>
<div class="t" style="left:490px;width:109px;text-align:center;top:593.00px;font-size:12px;line-height:16px;font-weight:normal;color:#646658;letter-spacing:0.161px;">16:08:55</div>
<div class="t" style="left:599px;width:72px;text-align:center;top:586.00px;font-size:12px;line-height:16px;font-weight:normal;color:#646658;letter-spacing:0.140px;">7 (70%)</div>
<div class="t" style="left:671px;width:73px;text-align:center;top:586.00px;font-size:12px;line-height:16px;font-weight:normal;color:#646658;letter-spacing:0.148px;">4,000 (40%)</div>
<div class="t" style="left:744px;width:152px;text-align:center;top:578.50px;font-size:12px;line-height:16px;font-weight:normal;color:#646658;letter-spacing:0.028px;">не допущен к сдаче</div>
<div class="t" style="left:744px;width:152px;text-align:center;top:593.00px;font-size:12px;line-height:16px;font-weight:normal;color:#646658;letter-spacing:0.153px;">экзамена</div>
<div class="t" style="left:896px;width:42px;text-align:center;top:586.00px;font-size:12px;line-height:16px;font-weight:normal;color:#646658;letter-spacing:0.194px;">00:25</div>
<div class="t" style="left:938px;width:101px;text-align:center;top:586.00px;font-size:12px;line-height:16px;font-weight:normal;color:#646658;letter-spacing:0.068px;">нет</div>
<div class="t" style="left:1039px;width:120px;text-align:center;top:586.00px;font-size:12px;line-height:16px;font-weight:normal;color:#646658;letter-spacing:0.068px;">нет</div>
<div class="t" style="left:1159px;width:87px;text-align:center;top:586.00px;font-size:12px;line-height:16px;font-weight:normal;color:#646658;letter-spacing:0.194px;">01.11.2013</div>
<svg class="r" style="left:61px;top:617.8px" width="13" height="13" viewBox="0 0 13 13"><circle cx="6.25" cy="6.4" r="4.8" fill="#f6f6fa"/><path d="M9.55 9.7 A4.65 4.65 0 0 1 2.95 9.7" stroke="#d0d0cc" stroke-width="1.2" fill="none"/><path d="M9.55 9.7 A4.65 4.65 0 0 0 10.6 5" stroke="#c4c4c0" stroke-width="1.2" fill="none"/><path d="M2.95 9.7 A4.65 4.65 0 0 1 10.1 3.6" stroke="#6a6a66" stroke-width="1.5" fill="none"/></svg>
<div class="t " style="left:79px;top:619.00px;font-size:12px;line-height:16px;font-weight:normal;color:#646658;letter-spacing:0.016px">Пути сообщения, технологические сооружения: [бак.-сокр.] (2 курс: ЗТЕ)</div>
<div class="t " style="left:57px;top:635.00px;font-size:12px;line-height:16px;font-weight:normal;color:#646658;letter-spacing:0.162px;">(22.11.2012)</div>
<div class="t" style="left:490px;width:109px;text-align:center;top:625.50px;font-size:12px;line-height:16px;font-weight:normal;color:#646658;letter-spacing:0.326px;">–</div>
<div class="t" style="left:599px;width:72px;text-align:center;top:625.50px;font-size:12px;line-height:16px;font-weight:normal;color:#646658;letter-spacing:0.326px;">–</div>
<div class="t" style="left:671px;width:73px;text-align:center;top:625.50px;font-size:12px;line-height:16px;font-weight:normal;color:#646658;letter-spacing:0.326px;">–</div>
<div class="t" style="left:744px;width:152px;text-align:center;top:625.50px;font-size:12px;line-height:16px;font-weight:normal;color:#646658;letter-spacing:0.326px;">–</div>
<div class="t" style="left:896px;width:42px;text-align:center;top:624.50px;font-size:12px;line-height:16px;font-weight:normal;color:#646658;letter-spacing:0.194px;">00:35</div>
<div class="t" style="left:938px;width:101px;text-align:center;top:624.50px;font-size:12px;line-height:16px;font-weight:normal;color:#646658;letter-spacing:0.068px;">нет</div>
<div class="t" style="left:1039px;width:120px;text-align:center;top:624.50px;font-size:12px;line-height:16px;font-weight:normal;color:#646658;letter-spacing:0.068px;">нет</div>
<div class="t" style="left:1159px;width:87px;text-align:center;top:624.50px;font-size:12px;line-height:16px;font-weight:normal;color:#646658;letter-spacing:0.194px;">01.11.2013</div>
<svg class="r" style="left:61px;top:658.8px" width="13" height="13" viewBox="0 0 13 13"><circle cx="6.25" cy="6.4" r="4.8" fill="#f6f6fa"/><path d="M9.55 9.7 A4.65 4.65 0 0 1 2.95 9.7" stroke="#d0d0cc" stroke-width="1.2" fill="none"/><path d="M9.55 9.7 A4.65 4.65 0 0 0 10.6 5" stroke="#c4c4c0" stroke-width="1.2" fill="none"/><path d="M2.95 9.7 A4.65 4.65 0 0 1 10.1 3.6" stroke="#6a6a66" stroke-width="1.5" fill="none"/></svg>
<div class="t " style="left:79px;top:660.00px;font-size:12px;line-height:16px;font-weight:normal;color:#646658;letter-spacing:0.140px">Безопасность жизнедеятельности: [бак.-сокр.] (2 курс:</div>
<div class="t " style="left:57px;top:676.00px;font-size:12px;line-height:16px;font-weight:normal;color:#646658;letter-spacing:0.061px;">ЗТЕ) (20.11.2012)</div>
<div class="t" style="left:490px;width:109px;text-align:center;top:666.50px;font-size:12px;line-height:16px;font-weight:normal;color:#646658;letter-spacing:0.326px;">–</div>
<div class="t" style="left:599px;width:72px;text-align:center;top:666.50px;font-size:12px;line-height:16px;font-weight:normal;color:#646658;letter-spacing:0.326px;">–</div>
<div class="t" style="left:671px;width:73px;text-align:center;top:666.50px;font-size:12px;line-height:16px;font-weight:normal;color:#646658;letter-spacing:0.326px;">–</div>
<div class="t" style="left:744px;width:152px;text-align:center;top:666.50px;font-size:12px;line-height:16px;font-weight:normal;color:#646658;letter-spacing:0.326px;">–</div>
<div class="t" style="left:896px;width:42px;text-align:center;top:665.50px;font-size:12px;line-height:16px;font-weight:normal;color:#646658;letter-spacing:0.194px;">00:30</div>
<div class="t" style="left:938px;width:101px;text-align:center;top:665.50px;font-size:12px;line-height:16px;font-weight:normal;color:#646658;letter-spacing:0.068px;">нет</div>
<div class="t" style="left:1039px;width:120px;text-align:center;top:665.50px;font-size:12px;line-height:16px;font-weight:normal;color:#646658;letter-spacing:0.068px;">нет</div>
<div class="t" style="left:1159px;width:87px;text-align:center;top:665.50px;font-size:12px;line-height:16px;font-weight:normal;color:#646658;letter-spacing:0.194px;">01.11.2013</div>
<div class="r" style="left:56px;top:460px;width:1190px;height:32px;border:3px solid #e60000;box-sizing:border-box"></div>
<div class="t" style="left:474px;top:950.5px;font-size:13px;line-height:16px;color:#6c7562;letter-spacing:-0.08px">Copyright&nbsp; © 1991-2013. «<span style="color:#3e4636;text-decoration:underline">Стэл – Компьютерные Системы</span>»</div>
<div class="r" style="left:0px;top:969px;width:1280px;height:1px;background:#f0f2ea"></div>
<div class="r" style="left:0px;top:970px;width:1280px;height:24px;background:#f3f3f3"></div>
<div class="t " style="left:2px;top:977.00px;font-size:11px;line-height:14px;font-weight:normal;color:#000;">Готово</div>
<div class="r" style="left:782px;top:973px;width:1px;height:19px;background:#d4d4d0"></div>
<div class="r" style="left:783px;top:973px;width:1px;height:19px;background:#fff"></div>
<div class="r" style="left:806px;top:973px;width:1px;height:19px;background:#d4d4d0"></div>
<div class="r" style="left:807px;top:973px;width:1px;height:19px;background:#fff"></div>
<div class="r" style="left:831px;top:973px;width:1px;height:19px;background:#d4d4d0"></div>
<div class="r" style="left:832px;top:973px;width:1px;height:19px;background:#fff"></div>
<div class="r" style="left:855px;top:973px;width:1px;height:19px;background:#d4d4d0"></div>
<div class="r" style="left:856px;top:973px;width:1px;height:19px;background:#fff"></div>
<div class="r" style="left:879px;top:973px;width:1px;height:19px;background:#d4d4d0"></div>
<div class="r" style="left:880px;top:973px;width:1px;height:19px;background:#fff"></div>
<div class="r" style="left:903px;top:973px;width:1px;height:19px;background:#d4d4d0"></div>
<div class="r" style="left:904px;top:973px;width:1px;height:19px;background:#fff"></div>
<div class="r" style="left:927px;top:973px;width:1px;height:19px;background:#d4d4d0"></div>
<div class="r" style="left:928px;top:973px;width:1px;height:19px;background:#fff"></div>
<div class="r" style="left:1136px;top:973px;width:1px;height:19px;background:#d4d4d0"></div>
<div class="r" style="left:1137px;top:973px;width:1px;height:19px;background:#fff"></div>
<div class="r" style="left:1179px;top:973px;width:1px;height:19px;background:#d4d4d0"></div>
<div class="r" style="left:1180px;top:973px;width:1px;height:19px;background:#fff"></div>
<svg class="r" style="left:931px;top:974px" width="18" height="17" viewBox="0 0 18 17"><circle cx="7" cy="7" r="6" fill="#3aa0d8"/><circle cx="5" cy="5" r="3" fill="#8ad06a"/><rect x="8" y="7" width="9" height="8" fill="#d8e0ea" stroke="#6a7a90" stroke-width="0.8"/></svg>
<div class="t " style="left:951px;top:977.00px;font-size:11px;line-height:14px;font-weight:normal;color:#000;">Местная интрасеть</div>
<svg class="r" style="left:1145px;top:976px" width="18" height="16" viewBox="0 0 18 16"><path d="M3 9 L6 5.5 L6 7.5 Q10 6.5 11 9" stroke="#a8a8a8" stroke-width="2" fill="none"/><path d="M7.5 10 A2.5 2.5 0 0 1 12.5 10" stroke="#a0a0a0" stroke-width="1.3" fill="none"/><rect x="6.5" y="10" width="7" height="5.5" fill="#a4a4a4"/></svg>
<svg class="r" style="left:1168px;top:983px" width="7" height="4" viewBox="0 0 7 4"><path d="M0 0H7L3.5 4Z" fill="#111"/></svg>
<svg class="r" style="left:1191px;top:976px" width="15" height="15" viewBox="0 0 15 15"><circle cx="6" cy="6" r="4.8" fill="#e8f0ff" stroke="#5a78b0" stroke-width="1.3"/><path d="M3.5 6H8.5M6 3.5V8.5" stroke="#1a4ac0" stroke-width="1.8"/><path d="M9.6 9.6L13 13" stroke="#7a5a40" stroke-width="2.2"/></svg>
<div class="t " style="left:1207px;top:977.00px;font-size:11px;line-height:14px;font-weight:normal;color:#000;">105%</div>
<svg class="r" style="left:1250px;top:983px" width="7" height="4" viewBox="0 0 7 4"><path d="M0 0H7L3.5 4Z" fill="#111"/></svg>
<div class="r" style="left:1275px;top:984px;width:2px;height:2px;background:#d8d8d8"></div>
<div class="r" style="left:1271px;top:988px;width:2px;height:2px;background:#d8d8d8"></div>
<div class="r" style="left:1275px;top:988px;width:2px;height:2px;background:#d8d8d8"></div>
<div class="r" style="left:1267px;top:992px;width:2px;height:2px;background:#d8d8d8"></div>
<div class="r" style="left:1271px;top:992px;width:2px;height:2px;background:#d8d8d8"></div>
<div class="r" style="left:1275px;top:992px;width:2px;height:2px;background:#d8d8d8"></div>
<div class="r" style="left:0px;top:994px;width:1280px;height:1px;background:#2a2a2a"></div>
<div class="r" style="left:0px;top:995px;width:1280px;height:3px;background:linear-gradient(#5a5a5a,#444)"></div>
<div class="r" style="left:0px;top:995px;width:92px;height:3px;background:linear-gradient(#f4a080,#e87848)"></div>
<div class="r" style="left:1115px;top:995px;width:165px;height:3px;background:#505050"></div>
</div></body></html>
